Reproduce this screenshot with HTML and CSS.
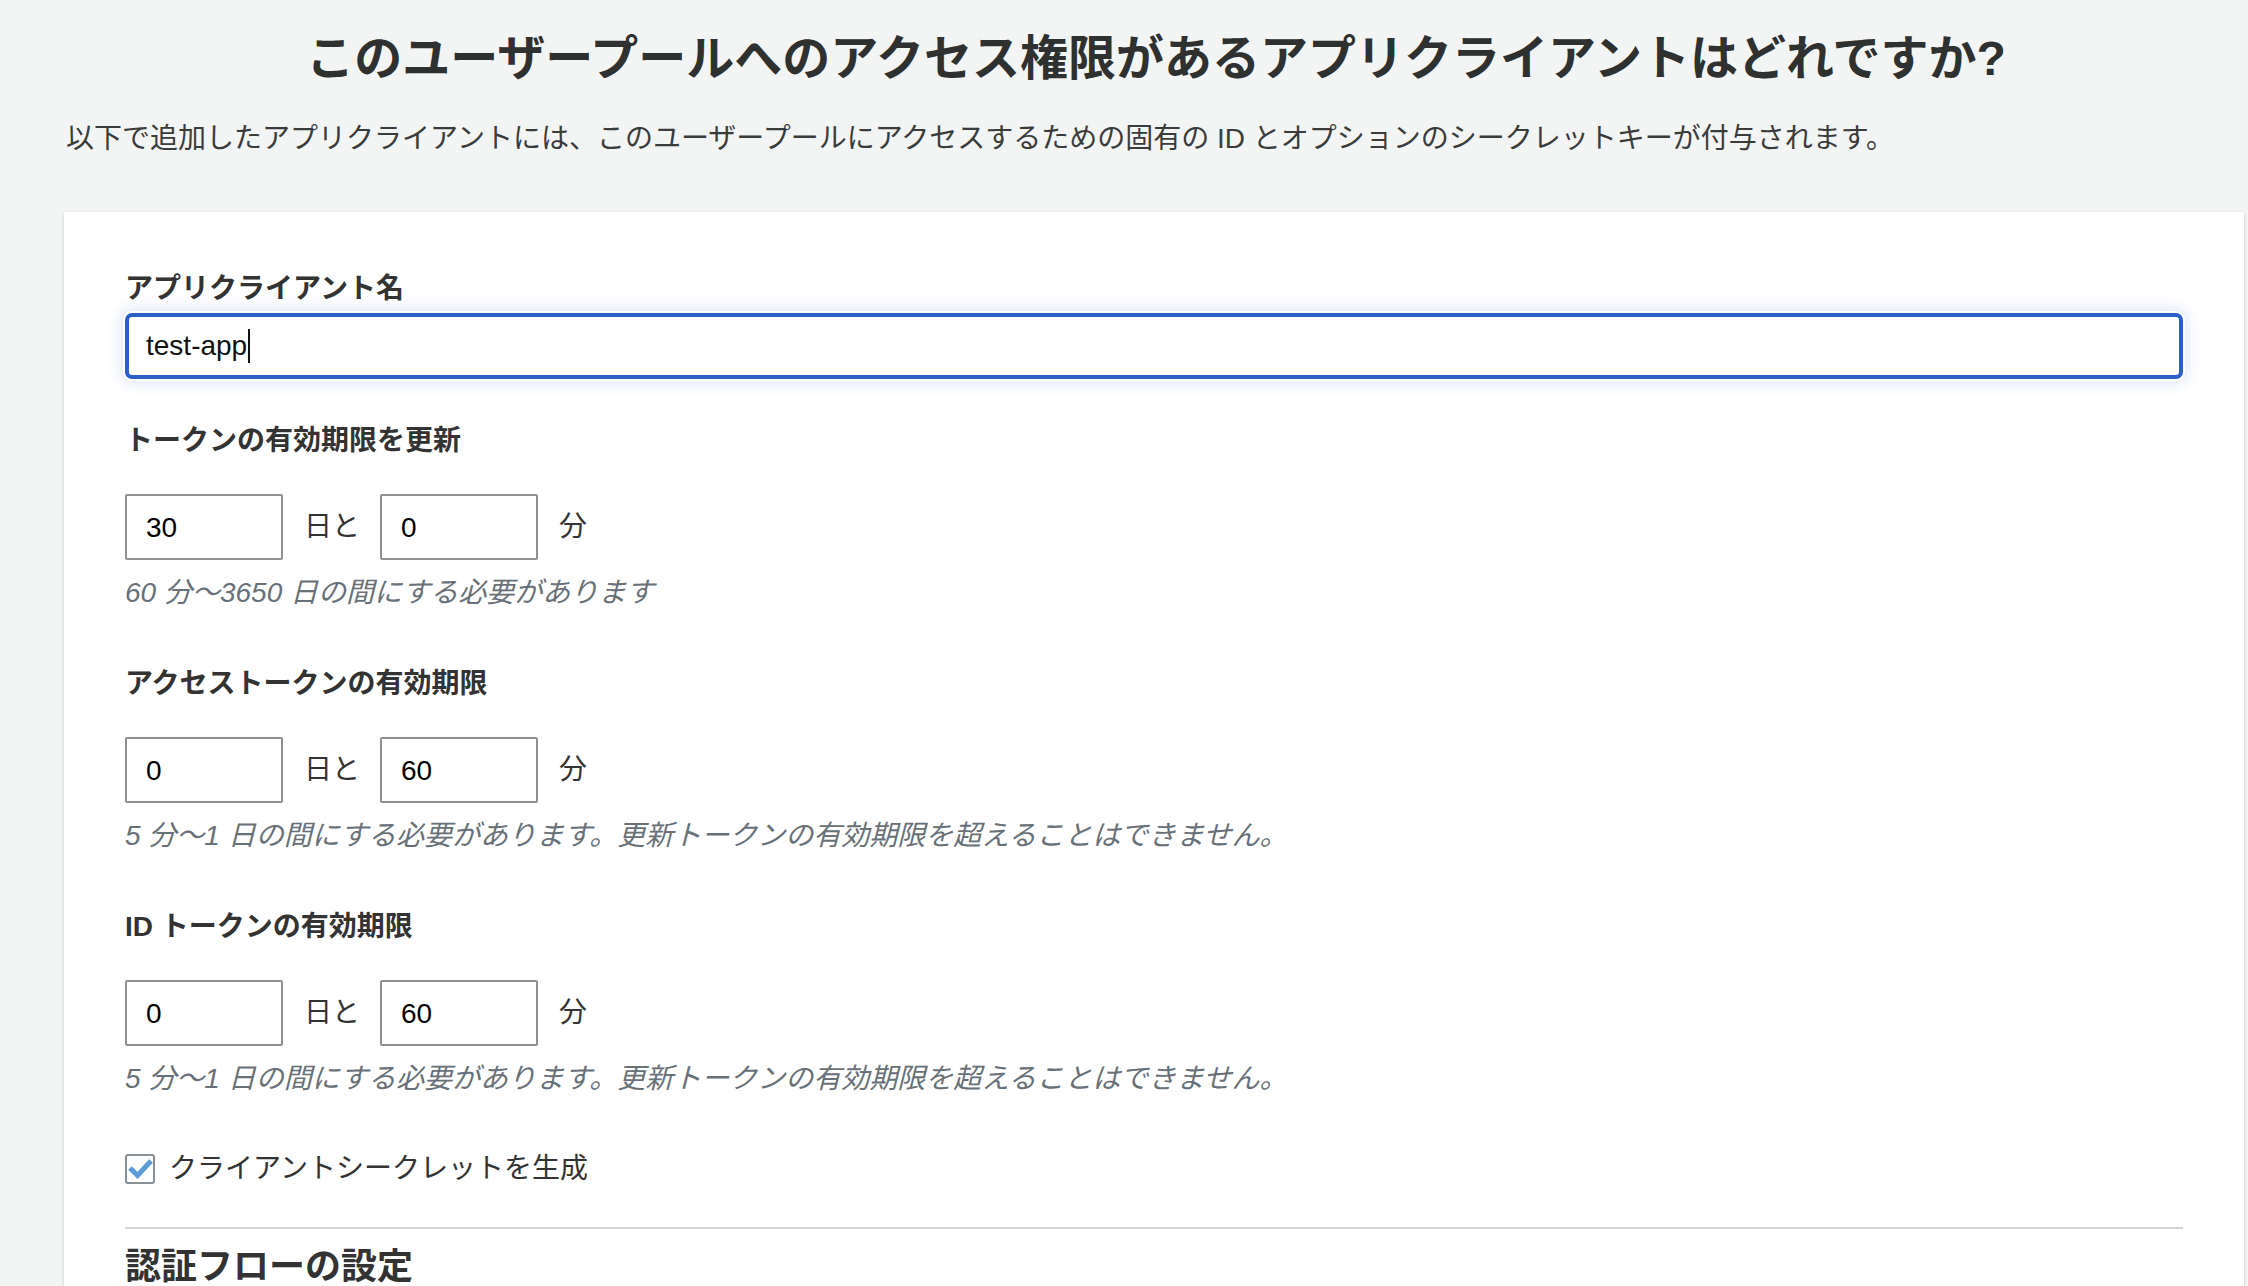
FILE: index.html
```html
<!DOCTYPE html>
<html lang="ja">
<head>
<meta charset="utf-8">
<title>アプリクライアント</title>
<link rel="stylesheet" href="styles.css">
</head>
<body>
<div class="page">
  <h1 class="title">このユーザープールへのアクセス権限があるアプリクライアントはどれですか?</h1>
  <p class="lead">以下で追加したアプリクライアントには、このユーザープールにアクセスするための固有の ID とオプションのシークレットキーが付与されます。</p>

  <div class="card">
    <div class="field">
      <div class="label">アプリクライアント名</div>
      <div class="text-input"><span class="value">test-app</span><span class="caret"></span></div>
    </div>

    <div class="section first">
      <div class="label">トークンの有効期限を更新</div>
      <div class="duration">
        <input class="num" type="text" value="30">
        <span class="unit">日と</span>
        <input class="num" type="text" value="0">
        <span class="unit">分</span>
      </div>
      <div class="hint">60 分〜3650 日の間にする必要があります</div>
    </div>

    <div class="section">
      <div class="label">アクセストークンの有効期限</div>
      <div class="duration">
        <input class="num" type="text" value="0">
        <span class="unit">日と</span>
        <input class="num" type="text" value="60">
        <span class="unit">分</span>
      </div>
      <div class="hint">5 分〜1 日の間にする必要があります。更新トークンの有効期限を超えることはできません。</div>
    </div>

    <div class="section">
      <div class="label">ID トークンの有効期限</div>
      <div class="duration">
        <input class="num" type="text" value="0">
        <span class="unit">日と</span>
        <input class="num" type="text" value="60">
        <span class="unit">分</span>
      </div>
      <div class="hint">5 分〜1 日の間にする必要があります。更新トークンの有効期限を超えることはできません。</div>
    </div>

    <div class="check">
      <span class="box"><svg width="26" height="26" viewBox="0 0 26 26"><path d="M3 12 L10.5 19.5 L24 5" fill="none" stroke="#5a9ad6" stroke-width="5" stroke-linejoin="miter"/></svg></span>
      <span class="check-label">クライアントシークレットを生成</span>
    </div>

    <div class="divider"></div>
    <h2 class="heading">認証フローの設定</h2>
  </div>
</div>
</body>
</html>
```

FILE: styles.css
```css
html, body {
  margin: 0;
  padding: 0;
  background: #f3f4f4;
  overflow: hidden;
}

body {
  font-family: "Liberation Sans", "Noto Sans CJK JP", sans-serif;
  color: #333333;
}

.page {
  padding: 29px 4px 0 64px;
}

.title {
  margin: 0;
  font-size: 48px;
  line-height: 60px;
  font-weight: 700;
  text-align: center;
  color: #2f3131;
  padding-left: 4px;
}

.lead {
  margin: 30px 0 0 2px;
  font-size: 28px;
  line-height: 40px;
  color: #3a3c3c;
}

.card {
  margin-top: 53px;
  background: #ffffff;
  border-radius: 2px;
  box-shadow: 0 1px 3px rgba(0, 28, 36, 0.22);
  padding: 57px 61px 60px 61px;
}

.label {
  font-size: 28px;
  line-height: 40px;
  font-weight: 700;
  color: #333333;
}

.text-input {
  margin-top: 4px;
  height: 66px;
  box-sizing: border-box;
  border: 4px solid #2c60c9;
  border-radius: 7px;
  padding: 0 17px;
  display: flex;
  align-items: center;
  font-size: 28px;
  color: #111111;
  box-shadow: 0 0 0 2px #ffffff, 0 0 14px 4px rgba(44, 96, 201, 0.16);
}

.caret {
  display: inline-block;
  width: 2px;
  height: 34px;
  background: #111111;
  margin-left: 1px;
}

.section {
  margin-top: 51px;
}

.section.first {
  margin-top: 42px;
}

.duration {
  margin-top: 33px;
  display: flex;
  align-items: center;
}

.num {
  width: 158px;
  height: 66px;
  box-sizing: border-box;
  border: 2px solid #8e9194;
  border-radius: 2px;
  padding: 2px 0 0 19px;
  margin: 0;
  font-family: "Liberation Sans", "Noto Sans CJK JP", sans-serif;
  font-size: 28px;
  color: #000000;
  background: #ffffff;
  outline: none;
}

.unit {
  font-size: 28px;
  line-height: 40px;
  padding: 0 20px 0 21px;
  color: #333333;
}

.hint {
  margin-top: 13px;
  font-size: 28px;
  line-height: 40px;
  font-style: italic;
  color: #687078;
}

.check {
  margin-top: 50px;
  display: flex;
  align-items: center;
  height: 40px;
}

.box {
  width: 30px;
  height: 30px;
  box-sizing: border-box;
  border: 2px solid #8a9196;
  border-radius: 3px;
  display: flex;
  align-items: center;
  justify-content: center;
  background: #ffffff;
}

.check-label {
  margin-left: 14px;
  font-size: 28px;
  line-height: 40px;
  color: #333333;
}

.divider {
  margin-top: 38px;
  height: 2px;
  background: #d4d6d6;
}

.heading {
  margin: 14px 0 0 0;
  font-size: 36px;
  line-height: 48px;
  font-weight: 700;
  color: #333333;
}
```
